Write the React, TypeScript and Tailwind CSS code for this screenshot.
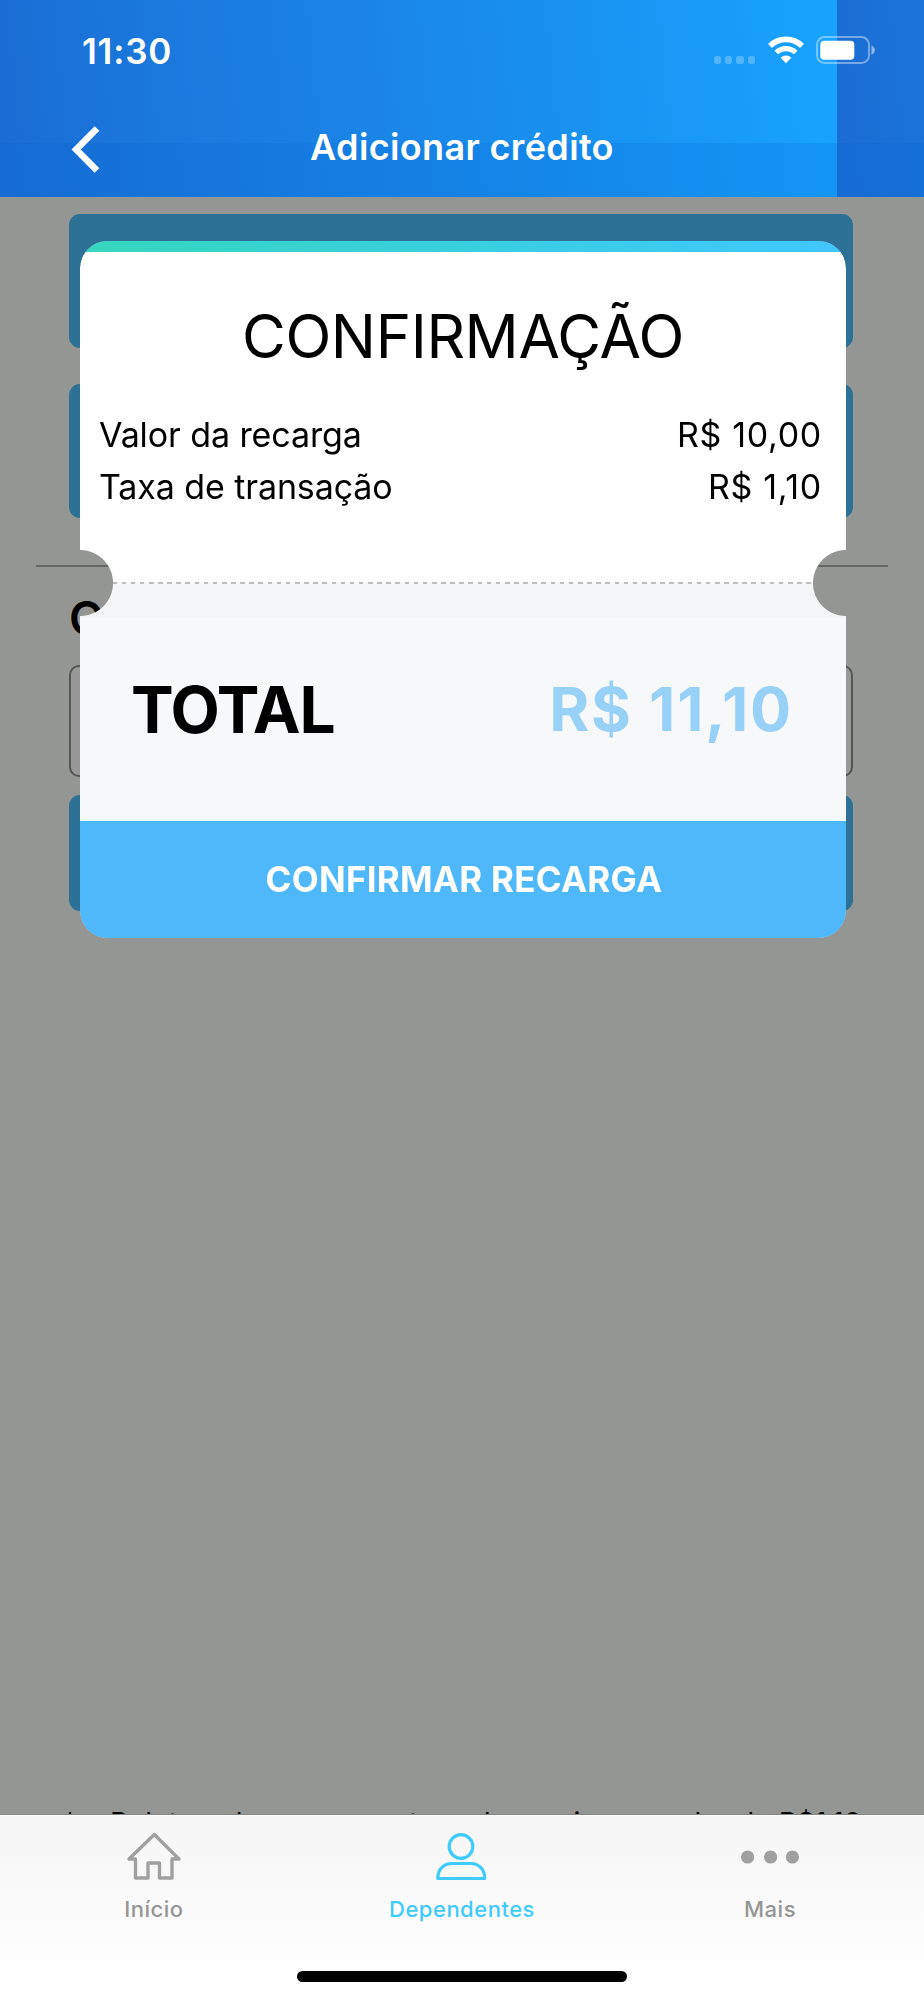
import type { ReactNode } from 'react';

interface Fee {
  label: string;
  value: string;
}

const FEES: Fee[] = [
  { label: 'Valor da recarga', value: 'R$ 10,00' },
  { label: 'Taxa de transação', value: 'R$ 1,10' },
];

function WifiIcon() {
  return (
    <svg width="38" height="28" viewBox="0 0 38 28" fill="none" stroke="white">
      <path d="M3 9.9A23 23 0 0 1 35 9.9" strokeWidth="5.6" />
      <path d="M9.3 16.5A14 14 0 0 1 28.7 16.5" strokeWidth="5.2" />
      <path d="M19 27.2L13.6 21.8A7.6 7.6 0 0 1 24.4 21.8Z" fill="white" stroke="none" />
    </svg>
  );
}

function BatteryIcon() {
  return (
    <svg width="60" height="28" viewBox="0 0 60 28" fill="none">
      <rect x="1" y="1" width="52" height="26" rx="7.5" stroke="white" strokeOpacity="0.4" strokeWidth="2" />
      <rect x="4.3" y="4.8" width="34" height="19" rx="4" fill="white" />
      <path d="M55.5 9.5Q59 11.5 59 14T55.5 19Z" fill="white" fillOpacity="0.5" />
    </svg>
  );
}

function HomeIcon() {
  return (
    <svg width="54" height="48" viewBox="0 0 54 48" fill="none" stroke="#a0a0a0" strokeWidth="3.4" strokeLinejoin="round" strokeLinecap="round">
      <path d="M27.3 2.5L52 27H45V46H32.5V31H21V46H8.5V27H2Z" />
    </svg>
  );
}

function PersonIcon() {
  return (
    <svg width="52" height="50" viewBox="0 0 52 50" fill="none" stroke="#3fcbff" strokeWidth="3.2" strokeLinejoin="round">
      <circle cx="25" cy="15.5" r="11.8" />
      <path d="M1.8 47.5C1.8 38 8 32.5 16 32.5H34.5C42.5 32.5 48.7 38 48.7 47.5Z" />
    </svg>
  );
}

function DotsIcon() {
  return (
    <svg width="58" height="16" viewBox="0 0 58 16" fill="#a0a0a0">
      <circle cx="6.6" cy="9" r="6.6" />
      <circle cx="29.6" cy="9" r="6.6" />
      <circle cx="51.4" cy="9" r="6.6" />
    </svg>
  );
}

function Tab({ icon, label, active }: { icon: ReactNode; label: string; active?: boolean }) {
  return (
    <button className="flex flex-1 flex-col items-center">
      <span className="flex h-[78px] items-center">{icon}</span>
      <span className={`text-[22px] leading-7 tracking-[0.5px] font-medium ${active ? 'text-[#3fcbff]' : 'text-[#959595]'}`}>
        {label}
      </span>
    </button>
  );
}

function Header() {
  return (
    <header className="relative h-[197px] bg-[linear-gradient(84deg,#1b6dd4,#18a3ff)] bg-[length:837px_197px] bg-repeat-x text-white">
      <div className="absolute inset-x-0 top-[143px] bottom-0 bg-[#0062d0]/20" />
      <div className="relative flex h-[100px] items-start justify-between pl-[82px] pr-[48px]">
        <span className="mt-[30px] text-[35px] leading-[42px] font-semibold tracking-[0.8px]">11:30</span>
        <div className="mt-[36px] flex items-start">
          <div className="mt-[20px] mr-[12px] flex gap-[3.8px]">
            <i className="h-[7.5px] w-[7.5px] rounded-[2.5px] bg-white/25" />
            <i className="h-[7.5px] w-[7.5px] rounded-[2.5px] bg-white/25" />
            <i className="h-[7.5px] w-[7.5px] rounded-[2.5px] bg-white/25" />
            <i className="h-[7.5px] w-[7.5px] rounded-[2.5px] bg-white/25" />
          </div>
          <WifiIcon />
          <div className="ml-[11px]"><BatteryIcon /></div>
        </div>
      </div>
      <div className="relative grid h-[97px] grid-cols-[120px_1fr_120px] items-start">
        <button className="pl-[70px] pt-[26px]">
          <svg width="30" height="48" viewBox="0 0 30 48" fill="none" stroke="white" strokeWidth="6.6">
            <path d="M27 2.5L6.2 23.5L27 44.5" />
          </svg>
        </button>
        <h1 className="mt-[25px] text-center text-[36px] leading-[44px] font-semibold tracking-[0.35px]">Adicionar crédito</h1>
      </div>
    </header>
  );
}

// page content seen dimmed behind the receipt
function RechargePage() {
  return (
    <div className="flex h-full flex-col border-b border-[#858785] pt-[17px]">
      <div className="flex flex-col gap-9 pl-[69px] pr-[71.5px]">
        <div className="h-[134px] rounded-[11px] bg-[#2e7196]" />
        <div className="h-[134px] rounded-[11px] bg-[#2e7196]" />
      </div>
      <hr className="mt-[47px] ml-9 mr-9 border-t-2 border-[#656765]" />
      <div className="pl-[69px] pr-[71.5px]">
        <h2 className="mt-[24px] text-[46px] leading-[54px] font-semibold tracking-[-0.5px]">Outro valor</h2>
        <div className="mt-[20px] h-[112px] rounded-[10px] border-2 border-[#555] bg-[#989898]" />
        <div className="mt-[18px] h-[116px] rounded-[11px] bg-[#2e7196]" />
      </div>
      <div className="mt-auto h-[5px] overflow-hidden pl-[63px]">
        <p className="-mt-[2px] flex whitespace-nowrap text-[28px] leading-8 tracking-[0.12px]">
          <span className="w-[47px]">*</span>
          <span>Boleto cobramos uma taxa de serviço no valor de R$1,10</span>
        </p>
      </div>
    </div>
  );
}

function Receipt() {
  return (
    <section className="absolute left-[80px] top-[44px] flex h-[697px] w-[766px] flex-col overflow-hidden rounded-[27px] bg-white [mask-image:radial-gradient(circle_33px_at_0_342px,transparent_32.5px,black_33.5px),radial-gradient(circle_33px_at_100%_342px,transparent_32.5px,black_33.5px)] [mask-composite:intersect]">
      <div className="h-[11px] shrink-0 bg-linear-to-r from-[#36d6bd] to-[#40c6ff]" />
      <div className="flex h-[330px] shrink-0 flex-col">
        <h2 className="mt-[48px] text-center text-[60px] leading-[72px] tracking-[-0.4px]">CONFIRMAÇÃO</h2>
        <dl className="mt-[37px] pl-[19px] pr-[24px]">
          {FEES.map(fee => (
            <div key={fee.label} className="flex h-[51.5px] items-center justify-between text-[34px]">
              <dt className="tracking-[-0.1px]">{fee.label}</dt>
              <dd className="tracking-[0.7px]">{fee.value}</dd>
            </div>
          ))}
        </dl>
      </div>
      <div className="h-[36px] shrink-0 bg-[#f4f5f7]">
        <div className="h-[2px] bg-[repeating-linear-gradient(90deg,#bdbdbd_0_4.6px,#f8f8f8_4.6px_9.13px)] bg-[position:5px_0]" />
      </div>
      <div className="flex h-[203px] shrink-0 items-start justify-between border-b border-white bg-[#f7f8fa] pl-[51px] pr-[53px] font-bold">
        <span className="mt-[52px] text-[64px] leading-[80px] tracking-[-1.1px]">TOTAL</span>
        <span className="mt-[51px] text-[61px] leading-[80px] tracking-[1.8px] text-[#97d1f8]">R$ 11,10</span>
      </div>
      <button className="flex-1 bg-[#4fb8fb] pl-[2px] text-[35px] font-bold tracking-[0.25px] text-white">CONFIRMAR RECARGA</button>
    </section>
  );
}

export default function App() {
  return (
    <div className="flex h-[2000px] w-[924px] flex-col overflow-hidden bg-[#949694] font-[Inter,'Liberation_Sans',sans-serif] text-black">
      <Header />
      <main className="relative h-[1618px] shrink-0">
        <RechargePage />
        <Receipt />
      </main>
      <nav className="flex h-[185px] shrink-0 flex-col items-center border-t border-white bg-linear-to-b from-[#f5f5f5] via-[#fbfbfb] to-white">
        <div className="mt-px flex w-full">
          <Tab icon={<HomeIcon />} label="Início" />
          <Tab icon={<PersonIcon />} label="Dependentes" active />
          <Tab icon={<DotsIcon />} label="Mais" />
        </div>
        <div className="mt-[48px] h-[11px] w-[330px] rounded-full bg-black" />
      </nav>
    </div>
  );
}
